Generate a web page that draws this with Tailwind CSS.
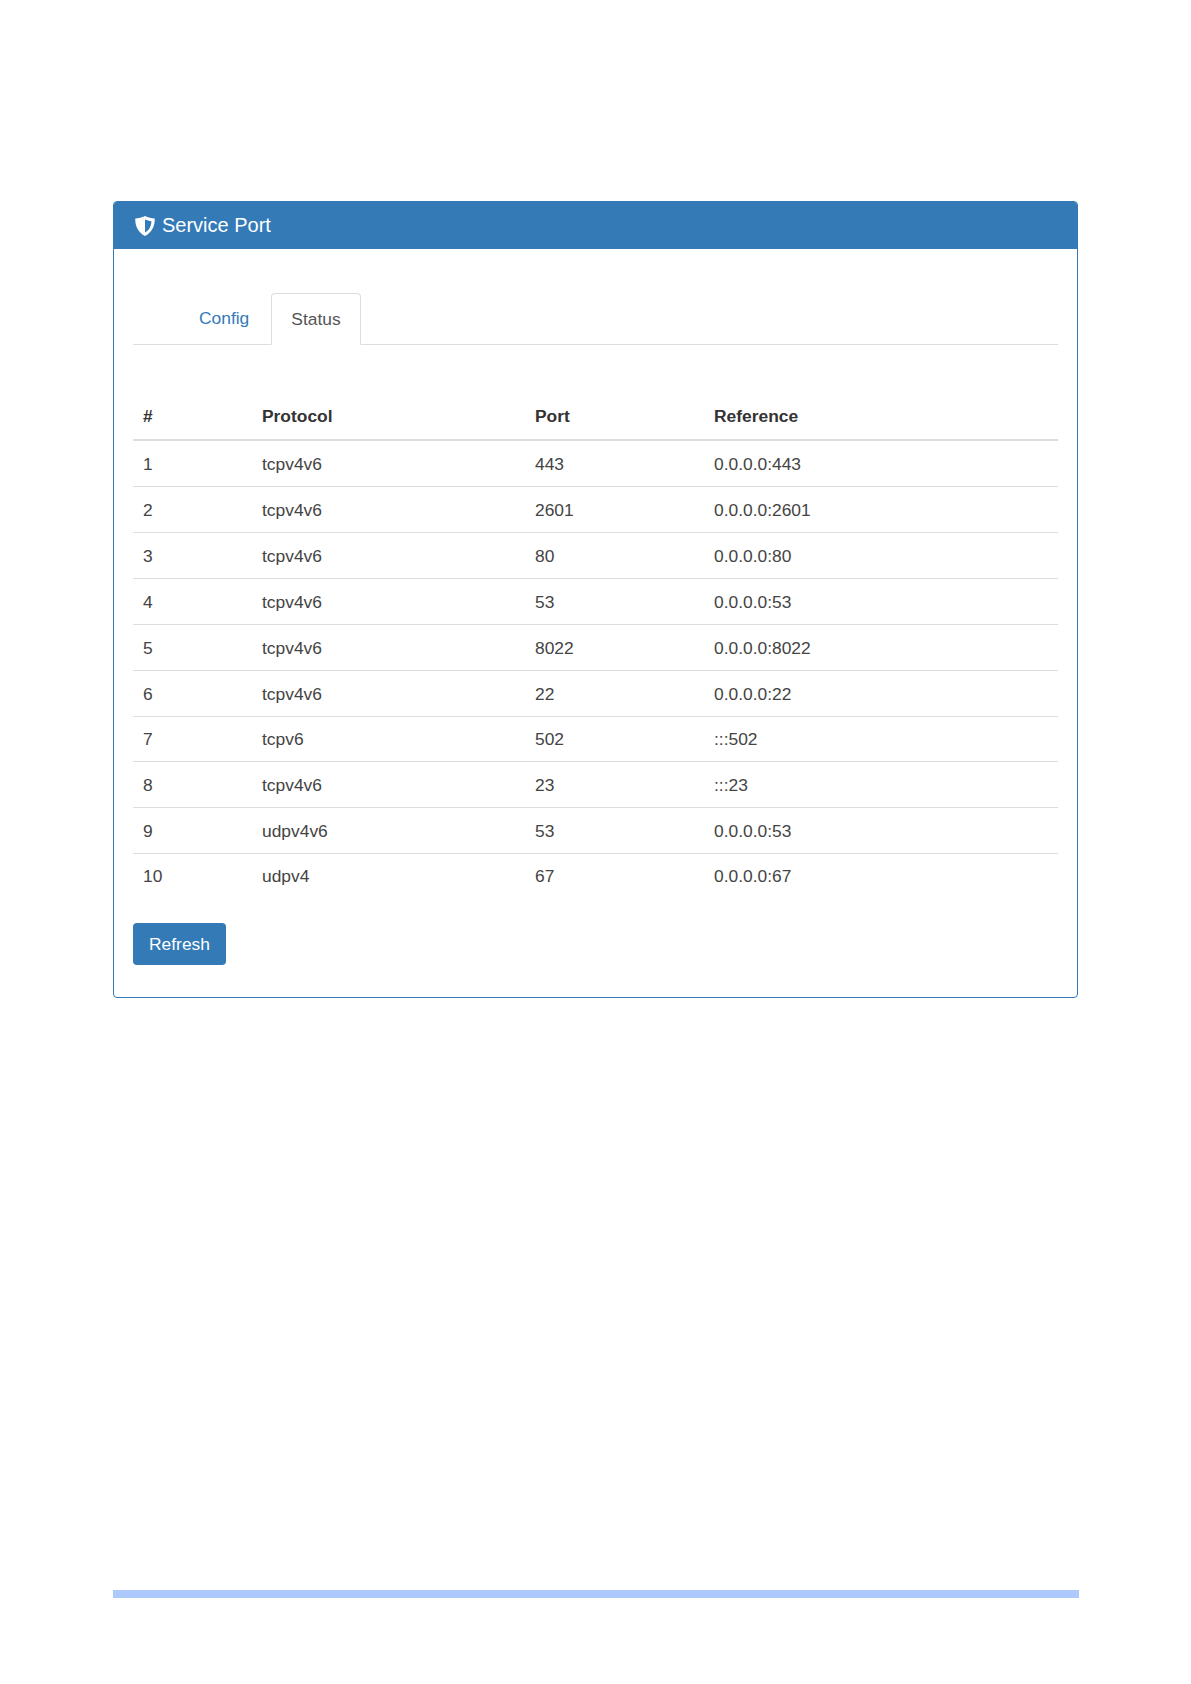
<!DOCTYPE html>
<html lang="en">
<head>
    <meta charset="UTF-8">
    <title>Service Port</title>
    <script src="https://cdn.jsdelivr.net/npm/@tailwindcss/browser@4"></script>
</head>
<body class="bg-white font-['Liberation_Sans',Arial,sans-serif] text-[#444] text-[17.4px]">
    <div class="h-[1684px] w-[1191px] pt-[201px] pl-[113px]">
        <!-- Panel -->
        <div class="w-[965px] h-[797px] border border-[#337ab7] rounded-[4px] overflow-hidden">
            <div class="h-[47px] bg-[#337ab7] text-white text-[20px] flex items-center pl-[21px] gap-[7px]">
                <svg class="w-[20px] h-[20px]" viewBox="0 0 20 20">
                    <path fill="#fff" fill-rule="evenodd" d="M10 0C7 1.500 3.500 2.200 .3 2.600 0 9 2.500 16.500 10 20 17.500 16.500 20 9 19.700 2.600 16.500 2.200 13 1.500 10 0ZM10 3.500V16.500C14.500 14 16.200 10 16.400 5.200 14 4.900 12 4.400 10 3.500Z"/>
                </svg>
                <span class="mb-[2px]">Service Port</span>
            </div>
            <div class="px-[19px]">
                <!-- Tabs -->
                <div class="mt-[44px] h-[52px] flex border-b border-[#ddd] pl-[47px]">
                    <a class="h-[51px] px-[19px] mr-[3px] flex items-center text-[#337ab7]">Config</a>
                    <a class="h-[52px] px-[19px] flex items-center text-[#555] bg-white border border-[#ddd] border-b-white rounded-t-[4px]">Status</a>
                </div>
                <!-- Table -->
                <table class="mt-[41px] w-[925px] table-fixed border-collapse">
                    <thead>
                        <tr class="h-[54px] border-b-2 border-[#ddd] text-left text-[#333]">
                            <th class="w-[119px] pl-[10px] pt-[8px] font-bold">#</th>
                            <th class="w-[273px] pl-[10px] pt-[8px] font-bold">Protocol</th>
                            <th class="w-[179px] pl-[10px] pt-[8px] font-bold">Port</th>
                            <th class="pl-[10px] pt-[8px] font-bold">Reference</th>
                        </tr>
                    </thead>
                    <tbody>
                        <tr class="h-[46px] border-b border-[#ddd]"><td class="pl-[10px] pt-[2px]">1</td><td class="pl-[10px] pt-[2px]">tcpv4v6</td><td class="pl-[10px] pt-[2px]">443</td><td class="pl-[10px] pt-[2px]">0.0.0.0:443</td></tr>
                        <tr class="h-[46px] border-b border-[#ddd]"><td class="pl-[10px] pt-[2px]">2</td><td class="pl-[10px] pt-[2px]">tcpv4v6</td><td class="pl-[10px] pt-[2px]">2601</td><td class="pl-[10px] pt-[2px]">0.0.0.0:2601</td></tr>
                        <tr class="h-[46px] border-b border-[#ddd]"><td class="pl-[10px] pt-[2px]">3</td><td class="pl-[10px] pt-[2px]">tcpv4v6</td><td class="pl-[10px] pt-[2px]">80</td><td class="pl-[10px] pt-[2px]">0.0.0.0:80</td></tr>
                        <tr class="h-[46px] border-b border-[#ddd]"><td class="pl-[10px] pt-[2px]">4</td><td class="pl-[10px] pt-[2px]">tcpv4v6</td><td class="pl-[10px] pt-[2px]">53</td><td class="pl-[10px] pt-[2px]">0.0.0.0:53</td></tr>
                        <tr class="h-[46px] border-b border-[#ddd]"><td class="pl-[10px] pt-[2px]">5</td><td class="pl-[10px] pt-[2px]">tcpv4v6</td><td class="pl-[10px] pt-[2px]">8022</td><td class="pl-[10px] pt-[2px]">0.0.0.0:8022</td></tr>
                        <tr class="h-[46px] border-b border-[#ddd]"><td class="pl-[10px] pt-[2px]">6</td><td class="pl-[10px] pt-[2px]">tcpv4v6</td><td class="pl-[10px] pt-[2px]">22</td><td class="pl-[10px] pt-[2px]">0.0.0.0:22</td></tr>
                        <tr class="h-[45px] border-b border-[#ddd]"><td class="pl-[10px] pt-[2px]">7</td><td class="pl-[10px] pt-[2px]">tcpv6</td><td class="pl-[10px] pt-[2px]">502</td><td class="pl-[10px] pt-[2px]">:::502</td></tr>
                        <tr class="h-[46px] border-b border-[#ddd]"><td class="pl-[10px] pt-[2px]">8</td><td class="pl-[10px] pt-[2px]">tcpv4v6</td><td class="pl-[10px] pt-[2px]">23</td><td class="pl-[10px] pt-[2px]">:::23</td></tr>
                        <tr class="h-[46px] border-b border-[#ddd]"><td class="pl-[10px] pt-[2px]">9</td><td class="pl-[10px] pt-[2px]">udpv4v6</td><td class="pl-[10px] pt-[2px]">53</td><td class="pl-[10px] pt-[2px]">0.0.0.0:53</td></tr>
                        <tr class="h-[46px]"><td class="pl-[10px]">10</td><td class="pl-[10px]">udpv4</td><td class="pl-[10px]">67</td><td class="pl-[10px]">0.0.0.0:67</td></tr>
                    </tbody>
                </table>
                <button class="mt-[24px] w-[93px] h-[42px] bg-[#337ab7] text-white rounded-[4px]">Refresh</button>
            </div>
        </div>
        <!-- Footer bar -->
        <div class="mt-[592px] w-[966px] h-[8px] bg-[#adc8fa]"></div>
    </div>
</body>
</html>
